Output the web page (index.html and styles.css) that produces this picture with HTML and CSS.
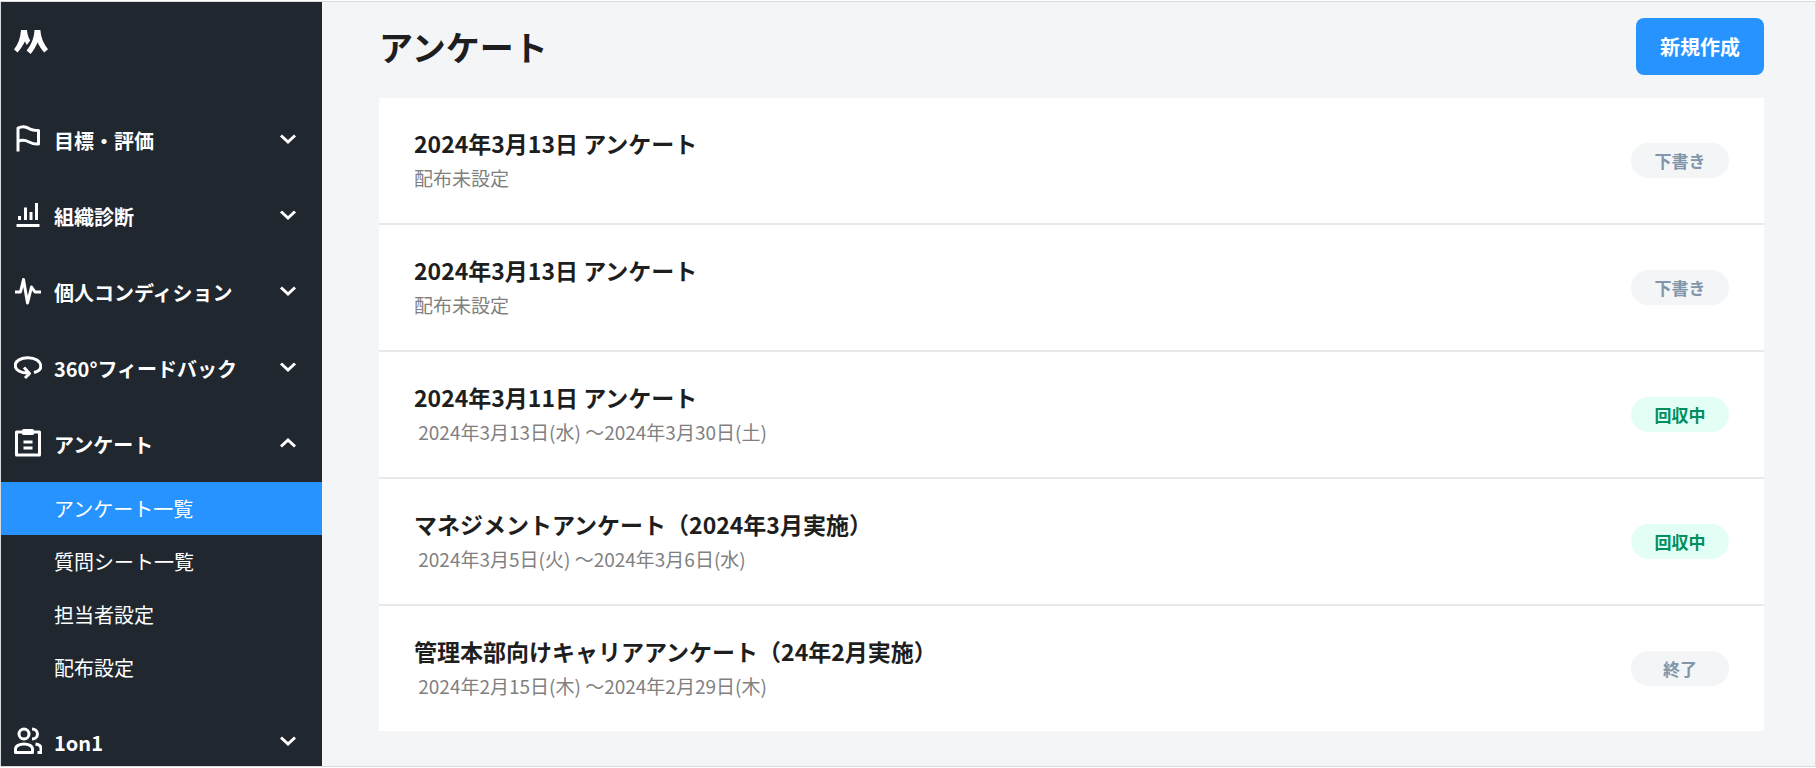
FILE: index.html
```html
<!DOCTYPE html>
<html lang="ja">
    <head>
        <meta charset="utf-8">
        <meta name="viewport" content="width=device-width, initial-scale=1">
        <title>アンケート</title>
        <link rel="stylesheet" href="styles.css">
    </head>
    <body>
        <div class="app">
            <aside class="sidebar">
                <a class="logo" href="#" aria-label="ホーム">
                    <svg width="34" height="24" viewBox="0 0 34 24" fill="#fff">
                        <path d="M7 0h6c.3 4 1.3 7.400 3.200 10.600L12.800 15 10.900 11.600C9 15.500 6.800 19 3.600 22.500L0 19.500C4 14.500 6.500 8 7 0z" />
                        <path d="M20.500 0h5.800c.7 7.500 3.200 14 7.700 19.300l-3.800 3.300c-3-3.300-5-6.600-6.600-10.300-1.600 4.200-3.900 8-7 11.700L12.600 20.500C17.500 14.500 20 8 20.500 0z" />
                    </svg>
                </a>
                <nav class="nav">
                    <button class="nav-item" type="button" aria-expanded="false">
                        <svg class="icon" viewBox="0 0 28 28">
                            <path d="M4 26.500V3C8 1 12 1.500 15 3.500S21 5.500 24.500 5.500v13.500C21 19.500 18 18.500 15 17S8 14.500 4 16.500" />
                        </svg>
                        <span>目標・評価</span>
                        <svg class="chevron" viewBox="0 0 16 10"><path d="M1 1.500l7 6.500 7-6.500" /></svg>
                    </button>
                    <button class="nav-item" type="button" aria-expanded="false">
                        <svg class="icon" viewBox="0 0 28 28">
                            <path d="M2.500 24.500h23M5.500 19v-4M11.500 19V6.500M17 19v-8M22.500 19V2" />
                        </svg>
                        <span>組織診断</span>
                        <svg class="chevron" viewBox="0 0 16 10"><path d="M1 1.500l7 6.500 7-6.500" /></svg>
                    </button>
                    <button class="nav-item" type="button" aria-expanded="false">
                        <svg class="icon" viewBox="0 0 28 28">
                            <path d="M1 15h5.500L9.500 2.500l4 23.500 4-16 3.500 5h6" />
                        </svg>
                        <span>個人コンディション</span>
                        <svg class="chevron" viewBox="0 0 16 10"><path d="M1 1.500l7 6.500 7-6.500" /></svg>
                    </button>
                    <button class="nav-item" type="button" aria-expanded="false">
                        <svg class="icon" viewBox="0 0 28 28">
                            <path d="M20 19.500c4-1 6.800-3.200 6.800-6C26.800 8 21 4.700 14 4.700S1.200 8 1.200 12.500c0 4.500 5.500 7.500 13 7.500M10 14.500l5.500 6-4.500 4.500" />
                        </svg>
                        <span>360°フィードバック</span>
                        <svg class="chevron" viewBox="0 0 16 10"><path d="M1 1.500l7 6.500 7-6.500" /></svg>
                    </button>
                    <button class="nav-item" type="button" aria-expanded="true">
                        <svg class="icon" viewBox="0 0 28 28">
                            <path d="M2.500 3h23v23h-23zM9.500 13h9M9.500 19h9" />
                            <path d="M9.500 1.500h9v3h-9z" />
                        </svg>
                        <span>アンケート</span>
                        <svg class="chevron" viewBox="0 0 16 10"><path d="M1 8.500L8 2l7 6.500" /></svg>
                    </button>
                    <ul class="submenu">
                        <li><a class="active" href="#" aria-current="page">アンケート一覧</a></li>
                        <li><a href="#">質問シート一覧</a></li>
                        <li><a href="#">担当者設定</a></li>
                        <li><a href="#">配布設定</a></li>
                    </ul>
                    <button class="nav-item" type="button" aria-expanded="false">
                        <svg class="icon" viewBox="0 0 28 28">
                            <circle cx="10" cy="7" r="5" />
                            <path d="M1.500 25.500V22c0-3 4-5 8.500-5s8.500 2 8.500 5v3.500zM18 2c3 0 5.500 2 5.500 5s-2.500 5-5.500 5M21.500 17c3 .500 5.500 2 5.500 4.500v4h-3.500" />
                        </svg>
                        <span>1on1</span>
                        <svg class="chevron" viewBox="0 0 16 10"><path d="M1 1.500l7 6.500 7-6.500" /></svg>
                    </button>
                </nav>
            </aside>

            <main class="main">
                <header class="page-header">
                    <h1>アンケート</h1>
                    <button class="create" type="button">新規作成</button>
                </header>
                <ul class="survey-list">
                    <li class="survey">
                        <div>
                            <h2>2024年3月13日 アンケート</h2>
                            <p>配布未設定</p>
                        </div>
                        <span class="badge">下書き</span>
                    </li>
                    <li class="survey">
                        <div>
                            <h2>2024年3月13日 アンケート</h2>
                            <p>配布未設定</p>
                        </div>
                        <span class="badge">下書き</span>
                    </li>
                    <li class="survey">
                        <div>
                            <h2>2024年3月11日 アンケート</h2>
                            <p>&nbsp;2024年3月13日(水) ～2024年3月30日(土)</p>
                        </div>
                        <span class="badge badge-open">回収中</span>
                    </li>
                    <li class="survey">
                        <div>
                            <h2>マネジメントアンケート（2024年3月実施）</h2>
                            <p>&nbsp;2024年3月5日(火) ～2024年3月6日(水)</p>
                        </div>
                        <span class="badge badge-open">回収中</span>
                    </li>
                    <li class="survey">
                        <div>
                            <h2>管理本部向けキャリアアンケート（24年2月実施）</h2>
                            <p>&nbsp;2024年2月15日(木) ～2024年2月29日(木)</p>
                        </div>
                        <span class="badge">終了</span>
                    </li>
                </ul>
            </main>
        </div>
    </body>
</html>
```

FILE: styles.css
```css
* {
    box-sizing: border-box;
}
body {
    margin: 0;
    padding: 1px 0;
    background: #fff;
    color: #1e1e1e;
    font-family: "Noto Sans CJK JP", sans-serif;
}
h1, h2, p, ul {
    margin: 0;
    padding: 0;
}
ul {
    list-style: none;
}
button {
    border: 0;
    font-family: inherit;
    cursor: pointer;
}
a {
    color: inherit;
    text-decoration: none;
}
.app {
    display: flex;
    min-height: calc(100vh - 2px);
    border: 1px solid #d8dadc;
    background: #f3f5f7;
}

/* sidebar */
.sidebar {
    flex: 0 0 321px;
    background: #20272f;
    color: #fff;
    font-size: 20px;
}
.logo {
    display: block;
    height: 99px;
    padding: 28px 13px;
}
.logo svg {
    display: block;
}
.nav {
    display: flex;
    flex-direction: column;
}
.nav-item {
    display: flex;
    align-items: center;
    gap: 12px;
    height: 48px;
    margin: 14px 0;
    padding: 0 26px 0 13px;
    background: none;
    color: #fff;
    font-size: 20px;
    font-weight: 700;
    text-align: left;
}
.nav-item:last-child {
    margin-bottom: 0;
}
.nav-item span {
    flex: 1;
    padding-top: 2px;
}
.nav-item svg {
    fill: none;
    stroke: #fff;
    stroke-width: 3;
}
.icon {
    width: 28px;
    height: 28px;
    stroke-linejoin: round;
}
.chevron {
    width: 16px;
    height: 10px;
    overflow: visible;
}
.submenu {
    padding: 1px 0 9px;
}
.submenu a {
    display: block;
    padding-left: 53px;
    line-height: 53px;
}
.submenu .active {
    background: #2693ff;
}

/* survey list */
.main {
    flex: 1;
    min-width: 0;
    padding: 16px 51px 34px 57px;
}
.page-header {
    display: flex;
    align-items: center;
    justify-content: space-between;
    margin-bottom: 23px;
}
.page-header h1 {
    font-size: 34px;
    line-height: 57px;
}
.create {
    height: 57px;
    padding: 0 24px;
    border-radius: 8px;
    background: #2693ff;
    color: #fff;
    font-size: 20px;
    font-weight: 700;
}
.survey {
    display: flex;
    align-items: center;
    justify-content: space-between;
    padding: 28px 35px;
    background: #fff;
}
.survey + .survey {
    border-top: 2px solid #e6eaed;
}
.survey h2 {
    font-size: 23px;
    line-height: 35px;
}
.survey p {
    color: #808080;
    font-size: 19px;
    line-height: 34px;
}
.badge {
    min-width: 98px;
    border-radius: 18px;
    background: #f3f5f7;
    color: #8295a9;
    font-size: 17px;
    font-weight: 700;
    line-height: 35px;
    text-align: center;
}
.badge-open {
    background: #e3fff5;
    color: #008f60;
}
```
